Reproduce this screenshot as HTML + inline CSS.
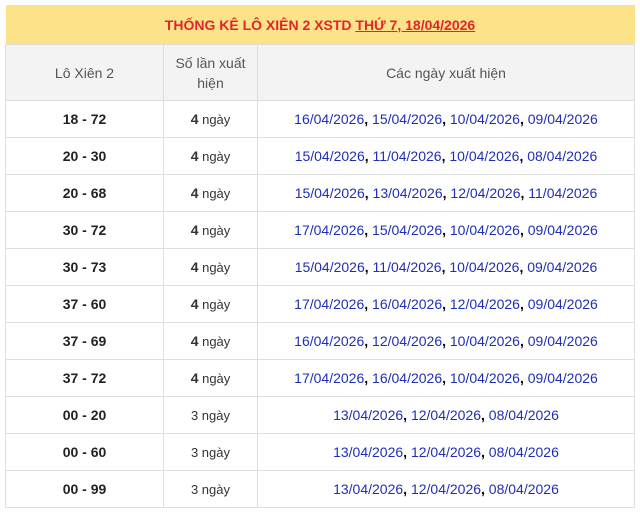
<!DOCTYPE html>
<html><head><meta charset="utf-8"><style>
body{margin:0;background:#fff;font-family:"Liberation Sans",Arial,sans-serif;}
table{position:absolute;left:5px;top:5px;width:630px;border-collapse:collapse;table-layout:fixed;}
td,th{border:1px solid #dedede;text-align:center;padding:0;font-size:14px;}
.t{height:39px;background:#fce38a;color:#e4242b;font-weight:bold;font-size:14px;border:none;}
.t u{text-decoration:underline;}
th{background:#f3f3f3;color:#555;font-weight:normal;height:55px;line-height:20px;}
td{height:36px;}
td.a{font-weight:bold;color:#222;}
td.b{color:#333;font-size:13px;}
td.b b{font-size:14px;}
td.c{color:#1f2fb5;}
td.c i{font-style:normal;color:#000;font-weight:bold;}
</style></head><body>
<table>
<colgroup><col style="width:158px"><col style="width:94px"><col></colgroup>
<tr><td colspan="3" class="t">THỐNG KÊ LÔ XIÊN 2 XSTD <u>THỨ 7, 18/04/2026</u></td></tr>
<tr><th>Lô Xiên 2</th><th>Số lần xuất<br>hiện</th><th>Các ngày xuất hiện</th></tr>
<tr><td class="a">18 - 72</td><td class="b"><b>4</b> ngày</td><td class="c">16/04/2026<i>,</i> 15/04/2026<i>,</i> 10/04/2026<i>,</i> 09/04/2026</td></tr>
<tr><td class="a">20 - 30</td><td class="b"><b>4</b> ngày</td><td class="c">15/04/2026<i>,</i> 11/04/2026<i>,</i> 10/04/2026<i>,</i> 08/04/2026</td></tr>
<tr><td class="a">20 - 68</td><td class="b"><b>4</b> ngày</td><td class="c">15/04/2026<i>,</i> 13/04/2026<i>,</i> 12/04/2026<i>,</i> 11/04/2026</td></tr>
<tr><td class="a">30 - 72</td><td class="b"><b>4</b> ngày</td><td class="c">17/04/2026<i>,</i> 15/04/2026<i>,</i> 10/04/2026<i>,</i> 09/04/2026</td></tr>
<tr><td class="a">30 - 73</td><td class="b"><b>4</b> ngày</td><td class="c">15/04/2026<i>,</i> 11/04/2026<i>,</i> 10/04/2026<i>,</i> 09/04/2026</td></tr>
<tr><td class="a">37 - 60</td><td class="b"><b>4</b> ngày</td><td class="c">17/04/2026<i>,</i> 16/04/2026<i>,</i> 12/04/2026<i>,</i> 09/04/2026</td></tr>
<tr><td class="a">37 - 69</td><td class="b"><b>4</b> ngày</td><td class="c">16/04/2026<i>,</i> 12/04/2026<i>,</i> 10/04/2026<i>,</i> 09/04/2026</td></tr>
<tr><td class="a">37 - 72</td><td class="b"><b>4</b> ngày</td><td class="c">17/04/2026<i>,</i> 16/04/2026<i>,</i> 10/04/2026<i>,</i> 09/04/2026</td></tr>
<tr><td class="a">00 - 20</td><td class="b">3 ngày</td><td class="c">13/04/2026<i>,</i> 12/04/2026<i>,</i> 08/04/2026</td></tr>
<tr><td class="a">00 - 60</td><td class="b">3 ngày</td><td class="c">13/04/2026<i>,</i> 12/04/2026<i>,</i> 08/04/2026</td></tr>
<tr><td class="a">00 - 99</td><td class="b">3 ngày</td><td class="c">13/04/2026<i>,</i> 12/04/2026<i>,</i> 08/04/2026</td></tr>
</table>
</body></html>
